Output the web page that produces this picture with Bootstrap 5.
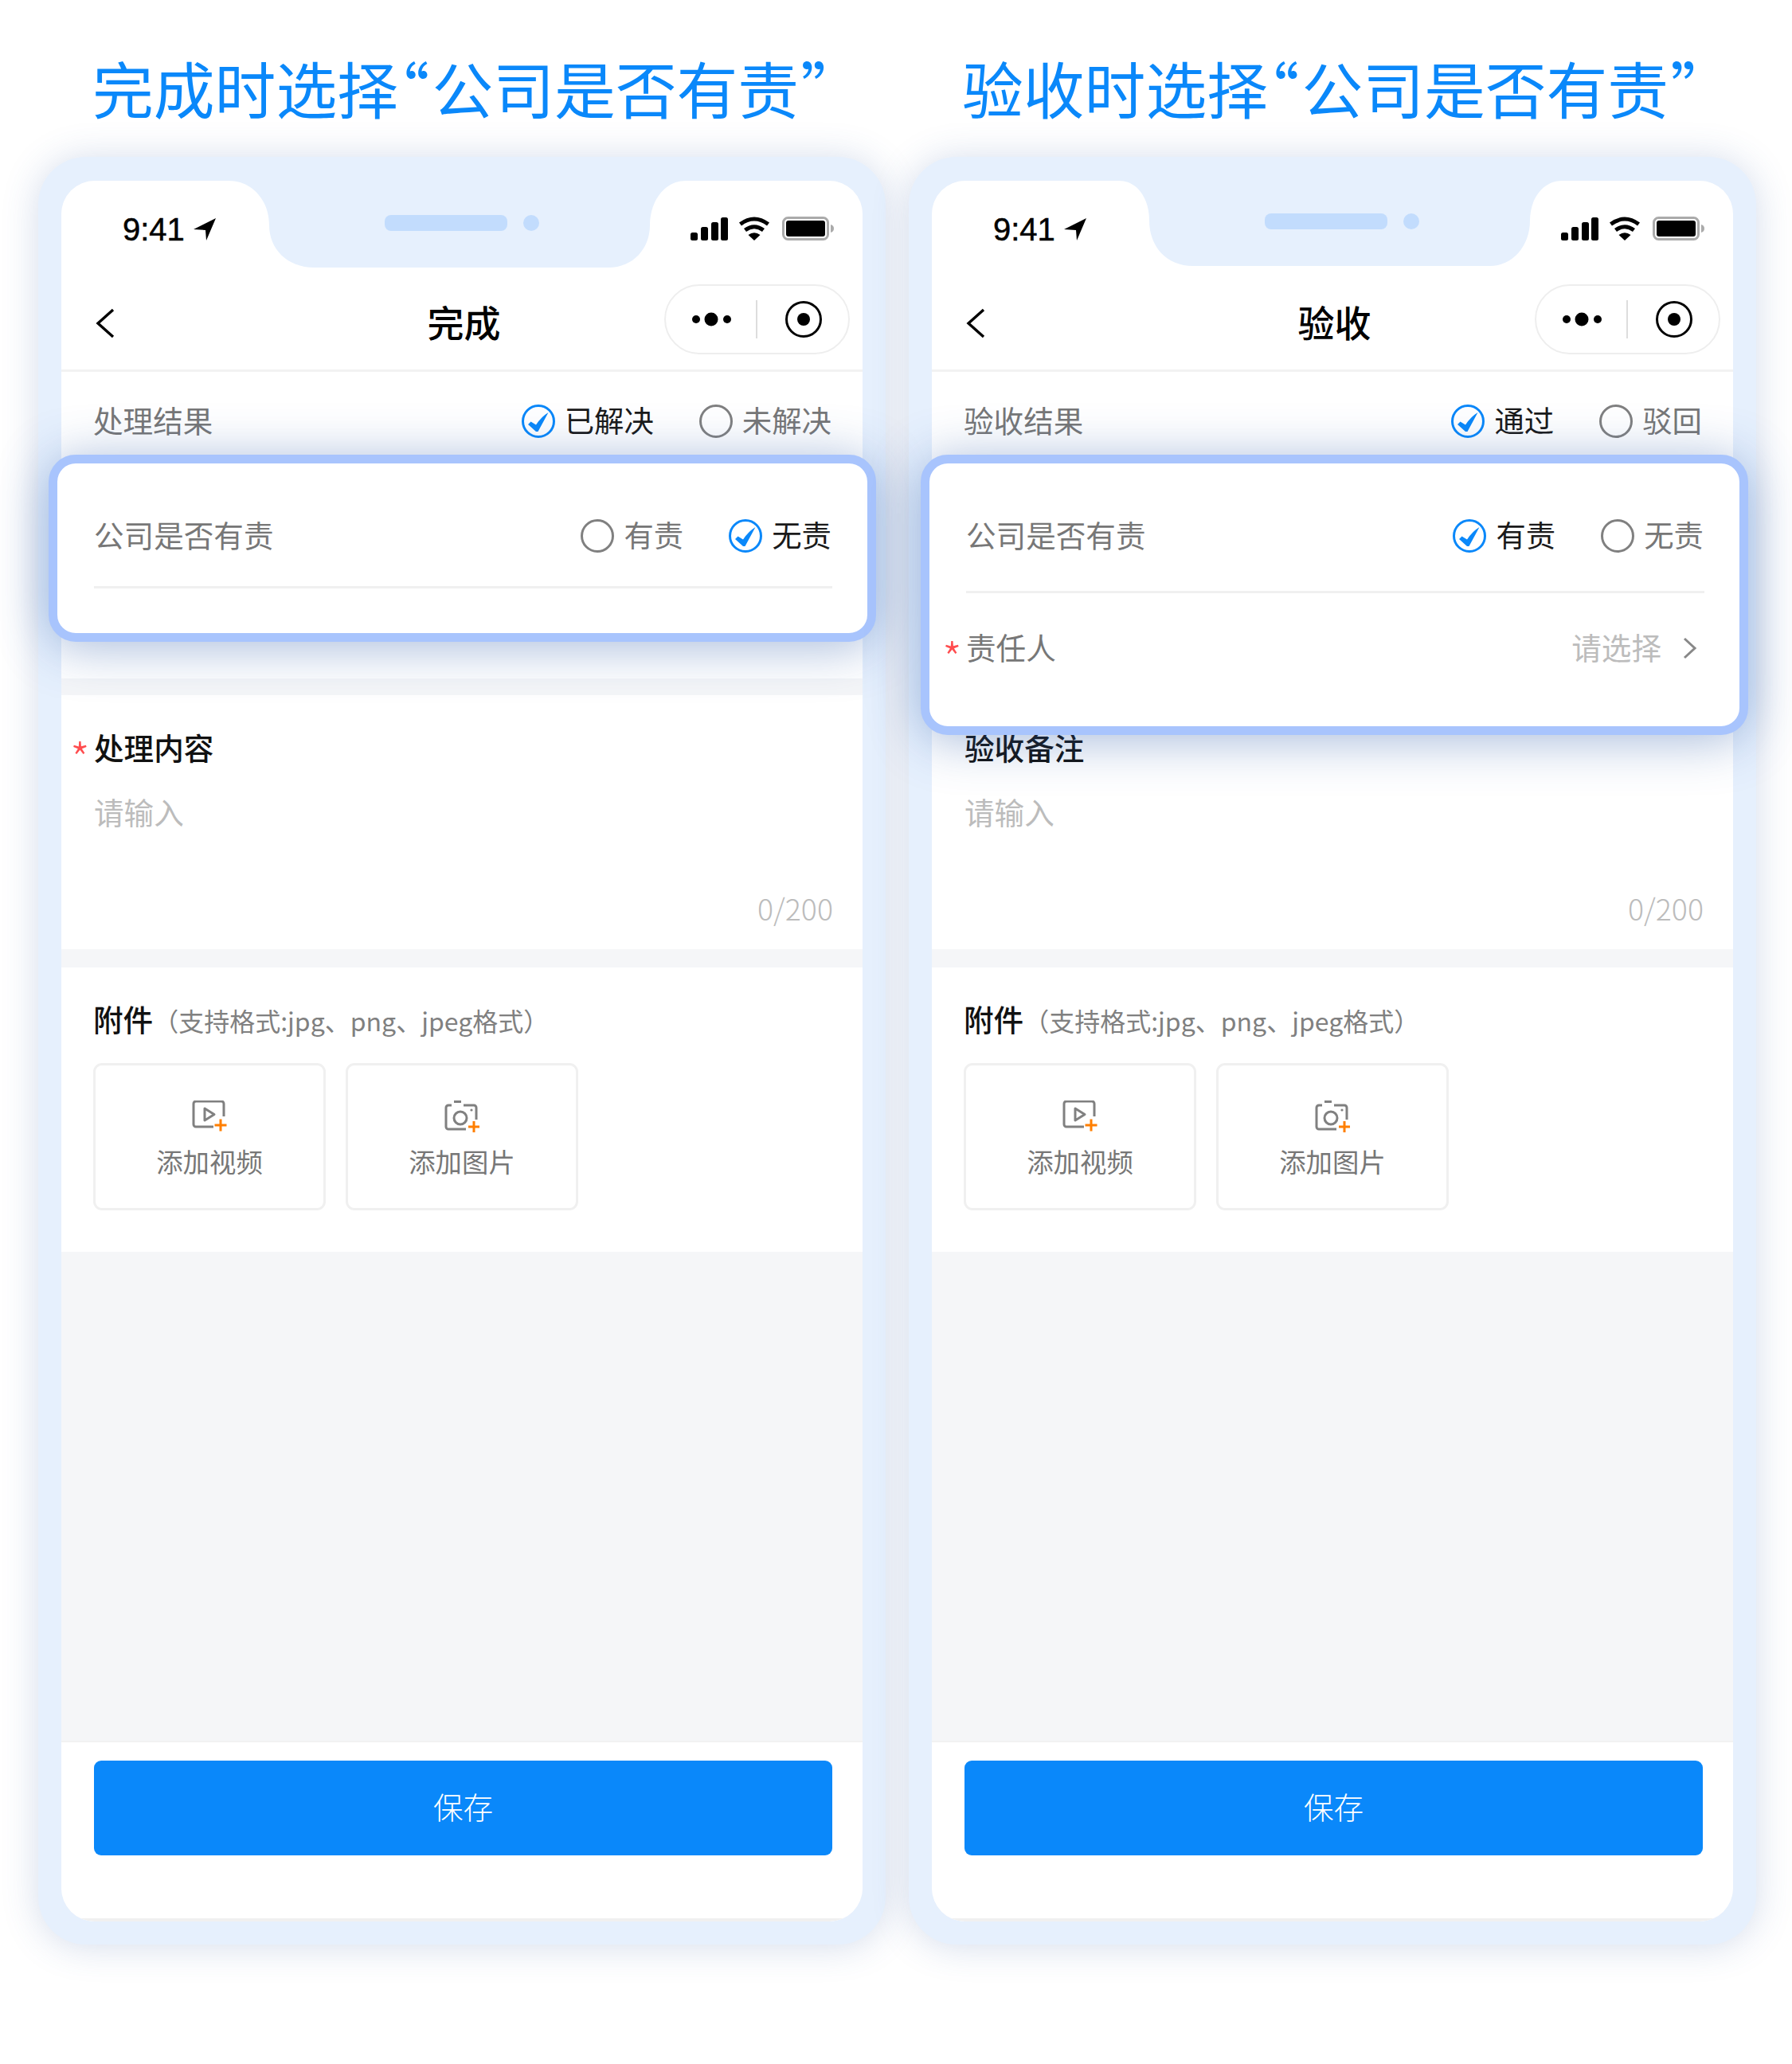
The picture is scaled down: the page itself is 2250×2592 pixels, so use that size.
<!DOCTYPE html>
<html lang="zh-CN">
<head>
<meta charset="utf-8">
<title>公司是否有责</title>
<link href="https://cdn.jsdelivr.net/npm/bootstrap@5.3.0/dist/css/bootstrap.min.css" rel="stylesheet">
<style>
html,body{margin:0;background:#fff;}
body{width:2250px;height:2592px;overflow:hidden;font-family:"Noto Sans CJK SC","Liberation Sans",sans-serif;color:#777;}
.board{padding-left:48px;gap:29px;}
.lane{width:1064px;flex:none;}
.hd{height:197px;padding:61px 0 0 68px;font-size:76.8px;line-height:98px;color:#0a88fa;font-weight:400;white-space:nowrap;font-feature-settings:"palt";margin:0;}
.hd span{font-feature-settings:"normal";}
.q-open{margin-right:4px;}
.q-close{margin-left:3px;}
.lane-b .hd{padding-left:67px;}
.phone{position:relative;background:#e6f0fd;border-radius:60px;padding:30px 29px 29px;height:2245px;box-shadow:0 2px 46px rgba(60,95,165,.22);}
.screen{position:relative;height:2186px;border-radius:42px;overflow:hidden;background:#f5f6f8;}
.notch{position:absolute;left:0;top:0;}
.statusbar{height:122px;padding:0 35px 0 77px;background:#fff;}
.timebox{gap:11px;}
.clock{font-family:"Liberation Sans",sans-serif;font-size:40px;line-height:46px;color:#000;font-weight:400;-webkit-text-stroke:.5px #000;}
.navrow{height:118px;background:#fff;border-bottom:3px solid #f2f2f2;padding:8px 16px 0 43px;position:relative;}
.navtitle{position:absolute;left:0;right:0;top:19px;text-align:center;font-size:46px;line-height:70px;font-weight:500;color:#000;padding-left:5px;}
.back{margin-top:30px;}
.capsule{width:233px;height:88px;border:2px solid #eee;border-radius:44px;padding-left:33px;}
.vline{width:2px;height:48px;background:#ddd;margin:0 34px 0 30px;}
.sec{background:#fff;margin-bottom:21px;}
.sec-top{height:385px;}
.sec-mid{height:319px;margin-bottom:23px;padding:42px 37px 0 41px;}
.sec-files{height:357px;margin-bottom:0;padding:41px 36px 0 40px;}
.frow{height:124px;padding:0 39px 0 40px;}
.lbl{font-size:37.6px;line-height:46px;height:46px;color:#777;margin-bottom:4px;}
.opts{gap:57px;}
.opt{gap:12px;font-size:37.4px;line-height:46px;color:#777;}
.opt.on{color:#1a1a1a;}
.txt-up{margin-bottom:4px;}
.lbl-strong{font-size:37.6px;line-height:46px;height:46px;font-weight:500;color:#111;}
.star{display:inline-block;width:30px;margin-left:-30px;color:#ff4d4f;font-size:56px;line-height:30px;vertical-align:-21px;font-weight:300;text-align:left;}
.ph{font-size:37.6px;line-height:46px;color:#bcbcbc;margin-top:35px;}
.cnt{font-size:37.5px;line-height:46px;color:#bcbcbc;margin-top:75px;text-align:right;font-weight:300;}
.fmt{font-size:32px;color:#808080;font-weight:400;}
.tiles{gap:25px;margin-top:33px;}
.tile{width:292px;height:185px;border:3px solid #f0f0f0;border-radius:11px;padding-top:44px;}
.tile-txt{font-size:33.4px;line-height:40px;color:#777;margin-top:16px;}
.grow-gray{flex:1 1 auto;}
.foot{height:227px;flex:none;background:#fff;border-top:2px solid #f2f2f2;border-bottom:4px solid #f0f0f0;padding:23px 38px 0 41px;}
.savebtn{height:119px;background:#0a88fa;border:0;border-radius:9px;color:#fff;font-size:37.6px;line-height:46px;--bs-btn-hover-bg:#0a88fa;--bs-btn-bg:#0a88fa;--bs-btn-color:#fff;font-weight:300;padding:0 0 5px;}
.hl{position:absolute;top:374px;width:1039px;z-index:5;background:#fff;border:11px solid #a8c4fd;border-radius:34px;box-shadow:0 6px 64px rgba(50,95,170,.44);}
.hl-a{left:13px;height:235px;}
.hl-b{left:15px;height:352px;}
.hl-row{height:154px;padding:28px 45px 0 46px;}
.hl-b .hl-row{height:160px;padding:22px 45px 0 46px;}
.hl-div{height:3px;background:#f0f0f0;margin:0 44px 0 46px;}
.hl-row2{height:167px;padding:0 52px 29px 46px;}
.pick{font-size:37.6px;line-height:46px;color:#bcbcbc;gap:26px;}
</style>
</head>
<body>
<svg width="0" height="0" class="position-absolute">
<defs>
<symbol id="r-on" viewBox="0 0 42 42"><circle cx="21" cy="21" r="19.5" fill="none" stroke="#0a88fa" stroke-width="3"/><path d="M8 25 L11.5 21.5 L18 25.5 Q25 15 33.5 10 Q27 22 20.5 34 L18 34 Z" fill="#0a88fa"/></symbol>
<symbol id="r-off" viewBox="0 0 42 42"><circle cx="21" cy="21" r="19.5" fill="none" stroke="#808080" stroke-width="3"/></symbol>
<symbol id="st" viewBox="0 0 181 32"><rect x="0" y="20" width="9" height="10" rx="2.5"/><rect x="13" y="13" width="9" height="17" rx="2.5"/><rect x="26" y="7" width="9" height="23" rx="2.5"/><rect x="38" y="1" width="9" height="29" rx="2.5"/><path d="M62.5 9.5 Q80 -3.5 97.5 9.5" fill="none" stroke="#000" stroke-width="5"/><path d="M68.5 17 Q80 8.5 91.5 17" fill="none" stroke="#000" stroke-width="5"/><path d="M80 30 L72.5 23 Q80 17.5 87.5 23 Z"/><rect x="116.5" y="1.5" width="56" height="27" rx="6" fill="none" stroke="#aaa" stroke-width="3"/><rect x="120" y="5" width="49" height="20" rx="3"/><path d="M176 10 Q180 11 180 15 Q180 19 176 20 Z" fill="#aaa"/></symbol>
<symbol id="loc" viewBox="0 0 28 28"><path d="M28 0 L0 14 L15 15 L16 28 Z"/></symbol>
<symbol id="bk" viewBox="0 0 24 38"><path d="M22 2 L3 19 L22 36" fill="none" stroke="#000" stroke-width="3.4"/></symbol>
<symbol id="dots" viewBox="0 0 50 20"><circle cx="5" cy="10" r="5"/><circle cx="24" cy="10" r="8.5"/><circle cx="44" cy="10" r="5"/></symbol>
<symbol id="rec" viewBox="0 0 48 48"><circle cx="24" cy="24" r="21.5" fill="none" stroke="#000" stroke-width="3"/><circle cx="24" cy="24" r="8"/></symbol>
<symbol id="vid" viewBox="0 0 44 40"><path d="M40 20 V4 a3 3 0 0 0 -3 -3 H5 a3 3 0 0 0 -3 3 V30 a3 3 0 0 0 3 3 H27" fill="none" stroke="#808080" stroke-width="3"/><path d="M16 10 L28 17.5 L16 25 Z" fill="none" stroke="#808080" stroke-width="3" stroke-linejoin="round"/><path d="M36 23.5 V38.5 M28.5 31 H43.5" stroke="#ff7f00" stroke-width="3"/></symbol>
<symbol id="cam" viewBox="0 0 44 40"><path d="M12 1.5 H21" stroke="#808080" stroke-width="3"/><path d="M9 6 H5 a3 3 0 0 0 -3 3 V33 a3 3 0 0 0 3 3 H27 M24 6 H37 a3 3 0 0 1 3 3 V24" fill="none" stroke="#808080" stroke-width="3"/><circle cx="20" cy="22" r="8" fill="none" stroke="#808080" stroke-width="3"/><circle cx="34" cy="12" r="1.6" fill="#808080"/><path d="M37 26 V40 M30 33 H44" stroke="#ff7f00" stroke-width="3"/></symbol>
<symbol id="chev" viewBox="0 0 20 28"><path d="M3 2 L16 14 L3 26" fill="none" stroke="#888" stroke-width="3"/></symbol>
</defs>
</svg>

<div class="board d-flex">
  <!-- left phone -->
  <div class="lane">
    <h1 class="hd">完成时选择<span class="q-open">“</span>公司是否有责<span class="q-close">”</span></h1>
    <div class="phone">
      <div class="screen d-flex flex-column">
        <div class="statusbar d-flex align-items-center justify-content-between">
          <div class="timebox d-flex align-items-center"><span class="clock">9:41</span><svg width="28" height="28"><use href="#loc"/></svg></div>
          <svg width="181" height="32"><use href="#st"/></svg>
        </div>
        <div class="navrow d-flex justify-content-between align-items-start">
          <svg class="back" width="24" height="38"><use href="#bk"/></svg>
          <div class="navtitle">完成</div>
          <div class="capsule d-flex align-items-center">
            <svg width="50" height="20"><use href="#dots"/></svg><span class="vline"></span><svg width="48" height="48"><use href="#rec"/></svg>
          </div>
        </div>
        <div class="sec sec-top">
          <div class="frow d-flex align-items-center justify-content-between">
            <span class="lbl">处理结果</span>
            <div class="opts d-flex">
              <div class="opt on d-flex align-items-center"><svg width="42" height="42"><use href="#r-on"/></svg><span class="txt-up">已解决</span></div>
              <div class="opt d-flex align-items-center"><svg width="42" height="42"><use href="#r-off"/></svg><span class="txt-up">未解决</span></div>
            </div>
          </div>
        </div>
        <div class="sec sec-mid">
          <div class="lbl-strong"><span class="star">*</span>处理内容</div>
          <div class="ph">请输入</div>
          <div class="cnt">0/200</div>
        </div>
        <div class="sec sec-files">
          <div class="lbl-strong">附件<span class="fmt">（支持格式:jpg、png、jpeg格式）</span></div>
          <div class="tiles d-flex">
            <div class="tile d-flex flex-column align-items-center"><svg width="44" height="40"><use href="#vid"/></svg><div class="tile-txt">添加视频</div></div>
            <div class="tile d-flex flex-column align-items-center"><svg width="44" height="40"><use href="#cam"/></svg><div class="tile-txt">添加图片</div></div>
          </div>
        </div>
        <div class="grow-gray"></div>
        <div class="foot"><button class="btn savebtn w-100" type="button">保存</button></div>
        <svg class="notch" width="1006" height="112"><path d="M210 0 C240 0 261 25 261 56 C261 85 283 109 318 109 L687 109 C718 109 739 85 739 56 C739 25 758 0 784 0 Z" fill="#e6f0fd"/><rect x="406" y="43" width="154" height="20" rx="8" fill="#c2dcfd"/><circle cx="590" cy="53" r="10" fill="#c2dcfd"/></svg>
      </div>
      <div class="hl hl-a">
        <div class="hl-row d-flex align-items-center justify-content-between">
          <span class="lbl">公司是否有责</span>
          <div class="opts d-flex">
            <div class="opt d-flex align-items-center"><svg width="42" height="42"><use href="#r-off"/></svg><span class="txt-up">有责</span></div>
            <div class="opt on d-flex align-items-center"><svg width="42" height="42"><use href="#r-on"/></svg><span class="txt-up">无责</span></div>
          </div>
        </div>
        <div class="hl-div"></div>
      </div>
    </div>
  </div>

  <!-- right phone -->
  <div class="lane lane-b">
    <h1 class="hd">验收时选择<span class="q-open">“</span>公司是否有责<span class="q-close">”</span></h1>
    <div class="phone">
      <div class="screen d-flex flex-column">
        <div class="statusbar d-flex align-items-center justify-content-between">
          <div class="timebox d-flex align-items-center"><span class="clock">9:41</span><svg width="28" height="28"><use href="#loc"/></svg></div>
          <svg width="181" height="32"><use href="#st"/></svg>
        </div>
        <div class="navrow d-flex justify-content-between align-items-start">
          <svg class="back" width="24" height="38"><use href="#bk"/></svg>
          <div class="navtitle">验收</div>
          <div class="capsule d-flex align-items-center">
            <svg width="50" height="20"><use href="#dots"/></svg><span class="vline"></span><svg width="48" height="48"><use href="#rec"/></svg>
          </div>
        </div>
        <div class="sec sec-top">
          <div class="frow d-flex align-items-center justify-content-between">
            <span class="lbl">验收结果</span>
            <div class="opts d-flex">
              <div class="opt on d-flex align-items-center"><svg width="42" height="42"><use href="#r-on"/></svg><span class="txt-up">通过</span></div>
              <div class="opt d-flex align-items-center"><svg width="42" height="42"><use href="#r-off"/></svg><span class="txt-up">驳回</span></div>
            </div>
          </div>
        </div>
        <div class="sec sec-mid">
          <div class="lbl-strong">验收备注</div>
          <div class="ph">请输入</div>
          <div class="cnt">0/200</div>
        </div>
        <div class="sec sec-files">
          <div class="lbl-strong">附件<span class="fmt">（支持格式:jpg、png、jpeg格式）</span></div>
          <div class="tiles d-flex">
            <div class="tile d-flex flex-column align-items-center"><svg width="44" height="40"><use href="#vid"/></svg><div class="tile-txt">添加视频</div></div>
            <div class="tile d-flex flex-column align-items-center"><svg width="44" height="40"><use href="#cam"/></svg><div class="tile-txt">添加图片</div></div>
          </div>
        </div>
        <div class="grow-gray"></div>
        <div class="foot"><button class="btn savebtn w-100" type="button">保存</button></div>
        <svg class="notch" width="1006" height="112"><path d="M235 0 C258 0 273 22 273 50 C273 83 295 107 328 107 L701 107 C728 107 751 83 751 50 C751 22 768 0 791 0 Z" fill="#e6f0fd"/><rect x="418" y="41" width="154" height="20" rx="8" fill="#c2dcfd"/><circle cx="602" cy="51" r="10" fill="#c2dcfd"/></svg>
      </div>
      <div class="hl hl-b">
        <div class="hl-row d-flex align-items-center justify-content-between">
          <span class="lbl">公司是否有责</span>
          <div class="opts d-flex">
            <div class="opt on d-flex align-items-center"><svg width="42" height="42"><use href="#r-on"/></svg><span class="txt-up">有责</span></div>
            <div class="opt d-flex align-items-center"><svg width="42" height="42"><use href="#r-off"/></svg><span class="txt-up">无责</span></div>
          </div>
        </div>
        <div class="hl-div"></div>
        <div class="hl-row2 d-flex align-items-center justify-content-between">
          <span class="lbl"><span class="star">*</span>责任人</span>
          <div class="pick d-flex align-items-center"><span class="txt-up">请选择</span><svg width="20" height="28"><use href="#chev"/></svg></div>
        </div>
      </div>
    </div>
  </div>
</div>
<script src="https://cdn.jsdelivr.net/npm/bootstrap@5.3.0/dist/js/bootstrap.bundle.min.js"></script>
</body>
</html>
